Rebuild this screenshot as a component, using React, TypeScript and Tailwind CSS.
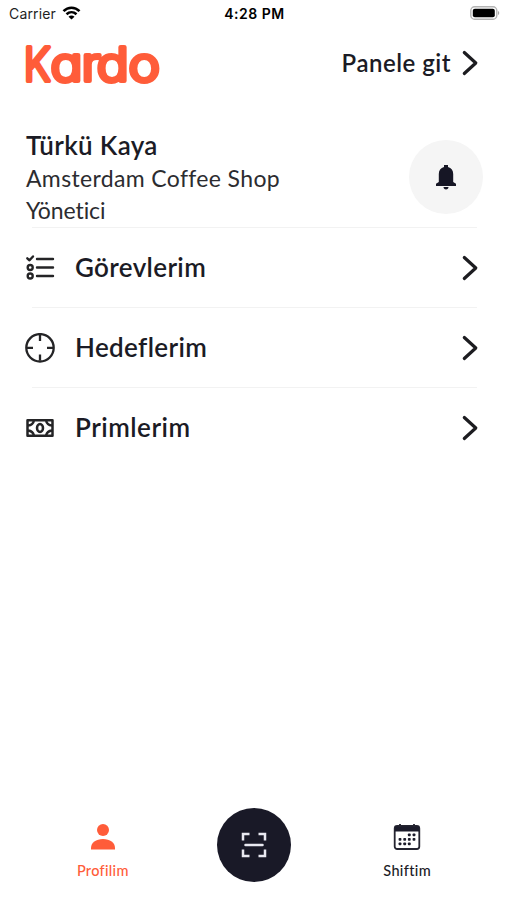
import React from 'react';

interface MenuItem {
  label: string;
  icon: React.ReactNode;
  tracking: string;
}

const Logo: React.FC = () => (
  <svg width="144" height="64" viewBox="0 0 144 64" className="block" role="img" aria-label="Kardo">
    <g
      fontFamily="Inter, sans-serif"
      fontSize="47"
      fill="#ff5c39"
      stroke="#ff5c39"
      strokeWidth="4.2"
      strokeLinejoin="round"
      style={{ fontFeatureSettings: '"cv11"' }}
    >
      <text x="-0.2" y="50.2" fontWeight="300" transform="scale(0.88 1)">K</text>
      <text x="23.5 51 64.3 92.4" y="50.2" fontWeight="300" transform="scale(1.13 1)">ardo</text>
    </g>
  </svg>
);

const Chevron: React.FC = () => (
  <svg width="18" height="28" viewBox="0 0 18 28" fill="none" stroke="#1c1c20" strokeWidth="3.2" strokeLinecap="round" strokeLinejoin="round" className="shrink-0">
    <path d="M3.3 3.5 14.8 14 3.3 24.5" />
  </svg>
);

const TasksIcon = () => (
  <svg width="30" height="30" viewBox="0 0 30 30" fill="none" stroke="#242426" strokeWidth="2.4" strokeLinecap="round" strokeLinejoin="round">
    <path d="M2.3 5.300 4.5 7.300 8 3.500" />
    <circle cx="5.2" cy="14.5" r="2.5" />
    <circle cx="5.2" cy="23" r="2.5" />
    <path d="M12 6h16M12 14.500h16M12 23h16" />
  </svg>
);

const TargetIcon = () => (
  <svg width="30" height="30" viewBox="0 0 30 30" fill="none" stroke="#242426" strokeWidth="2.3">
    <circle cx="15" cy="14.8" r="13.7" />
    <path d="M15 2v6M15 21.500v6M2 14.800h6M22 14.800h6" />
  </svg>
);

const MoneyIcon = () => (
  <svg width="30" height="30" viewBox="0 0 30 30" fill="none" stroke="#242426" strokeWidth="2.5" strokeLinejoin="round">
    <path d="M2.5 7.300h25v15.500h-25z" />
    <path d="M8.8 8c-.6 2.800-2.400 4.200-5.800 4.600M21.200 8c.6 2.800 2.400 4.200 5.800 4.600M8.800 22.200c-.6-2.800-2.400-4.200-5.800-4.600M21.200 22.200c.6-2.800 2.400-4.200 5.800-4.600" />
    <ellipse cx="15" cy="15" rx="3" ry="3.9" />
  </svg>
);

const BellIcon = () => (
  <svg width="22" height="26" viewBox="0 0 22 26" fill="#161625">
    <path d="M9 1h4v2c3.400.8 5.200 3.500 5.200 7v8l2.800 1.800V22H1v-2.200L3.800 18v-8c0-3.500 1.800-6.200 5.200-7z" />
    <path d="M8.500 23h5c0 1.500-1 2.400-2.500 2.400S8.500 24.500 8.500 23z" />
  </svg>
);

const PersonIcon = () => (
  <svg width="26" height="28" viewBox="0 0 26 28" fill="#ff5c39">
    <circle cx="13" cy="7" r="6" />
    <path d="M1 26.500v-1.500c0-5.400 5-9 12-9s12 3.600 12 9v1.500z" />
  </svg>
);

const ScanIcon = () => (
  <svg width="28" height="28" viewBox="0 0 28 28" fill="none" stroke="#e9e9f1" strokeWidth="2.5">
    <path d="M3 9.500V3H9.500M18.500 3H25V9.500M25 18.500V25H18.500M9.500 25H3V18.500" />
    <path d="M5.500 14h17" strokeLinecap="round" />
  </svg>
);

const dots = [
  [16.3, 11.8], [21, 11.8],
  [7, 16.3], [11.7, 16.3], [16.3, 16.3], [21, 16.3],
  [7, 20.8], [11.7, 20.8], [16.3, 20.8],
];

const CalendarIcon = () => (
  <svg width="28" height="28" viewBox="0 0 28 28" fill="none">
    <rect x="1.7" y="3" width="24.6" height="23" rx="2.5" stroke="#242430" strokeWidth="1.8" />
    <path d="M2 3.500h24v5H2z" fill="#1b1b2a" />
    <path d="M7 1v3M21 1v3" stroke="#242430" strokeWidth="1.8" />
    {dots.map(([x, y]) => (
      <rect key={`${x}-${y}`} x={x - 1.4} y={y - 1.4} width="2.8" height="2.8" rx="0.8" fill="#1b1b2a" />
    ))}
  </svg>
);

const menuItems: MenuItem[] = [
  { label: 'Görevlerim', icon: <TasksIcon />, tracking: 'tracking-[0.35px]' },
  { label: 'Hedeflerim', icon: <TargetIcon />, tracking: 'tracking-[0.35px]' },
  { label: 'Primlerim', icon: <MoneyIcon />, tracking: 'tracking-[0.5px]' },
];

const StatusBar: React.FC = () => (
  <div className="grid h-[26px] grid-cols-3 items-center pl-[9px] pr-[7px] font-[Inter,sans-serif] text-[14px] text-[#1f1f1f]">
    <div className="flex items-center gap-1.5">
      <span className="tracking-[0.15px]">Carrier</span>
      <svg width="19" height="14" viewBox="0 0 18 14" fill="none" stroke="#000" strokeWidth="2.6">
        <path d="M1 5.200c4.600-4.600 11.400-4.600 16 0" />
        <path d="M4 8.300c3-2.800 7-2.800 10 0" />
        <path d="M9 13.500 6 10.700c1.800-1.500 4.200-1.500 6 0z" fill="#000" stroke="none" />
      </svg>
    </div>
    <span className="text-center font-semibold tracking-[0.5px] text-black">4:28 PM</span>
    <svg width="30" height="14" viewBox="0 0 30 14" className="justify-self-end">
      <rect x="0.8" y="0.8" width="26" height="12.4" rx="3.8" fill="#fff" stroke="#b4b4b4" strokeWidth="1.4" />
      <rect x="2.8" y="2.8" width="22" height="8.4" rx="2" fill="#000" />
      <path d="M28 5c1.700.6 1.700 3.400 0 4z" fill="#a8a8a8" />
    </svg>
  </div>
);

export default function App() {
  return (
    <div className="flex h-[900px] w-full flex-col overflow-hidden bg-white font-[Lato,sans-serif] text-[#1b1b25]">
      <StatusBar />

      <header className="flex h-[74px] items-center justify-between pl-[24px] pr-[28px]">
        <Logo />
        <button className="flex items-center gap-[10px] text-[24px] font-semibold tracking-[0.5px]">
          Panele git
          <Chevron />
        </button>
      </header>

      <section className="flex h-[127px] items-center justify-between pl-[26px] pr-[24px] pt-[27px]">
        <div className="leading-[32px]">
          <h1 className="text-[26px] font-semibold tracking-[0.35px]">Türkü Kaya</h1>
          <p className="mt-px text-[23px] tracking-[0.35px] text-[#2c2c30]">Amsterdam Coffee Shop</p>
          <p className="text-[23px] tracking-[-0.1px] text-[#2c2c30]">Yönetici</p>
        </div>
        <button className="flex size-[74px] items-center justify-center rounded-full bg-[#f5f5f5]">
          <BellIcon />
        </button>
      </section>

      <nav className="flex flex-col">
        {menuItems.map((item) => (
          <div key={item.label}>
            <div className="ml-8 mr-[30px] h-px bg-[#f2f2f2]" />
            <button className="flex h-[79px] w-full items-center pl-[25px] pr-[28px]">
              {item.icon}
              <span className={`ml-5 flex-1 text-left text-[26px] font-semibold ${item.tracking}`}>{item.label}</span>
              <Chevron />
            </button>
          </div>
        ))}
      </nav>

      <footer className="mt-auto grid h-[100px] grid-cols-3 pl-[27px] pr-[25px] text-[14.5px]">
        <div className="flex flex-col items-center pt-[23px] text-[#ff5c39]">
          <PersonIcon />
          <span className="mt-[9px] font-medium tracking-[0.3px]">Profilim</span>
        </div>
        <div className="flex justify-center pt-[8px]">
          <button className="flex size-[74px] items-center justify-center rounded-full bg-[#191927]">
            <ScanIcon />
          </button>
        </div>
        <div className="flex flex-col items-center pl-[2px] pt-[23px]">
          <CalendarIcon />
          <span className="mt-[9px] font-medium tracking-[0.35px]">Shiftim</span>
        </div>
      </footer>
    </div>
  );
}
